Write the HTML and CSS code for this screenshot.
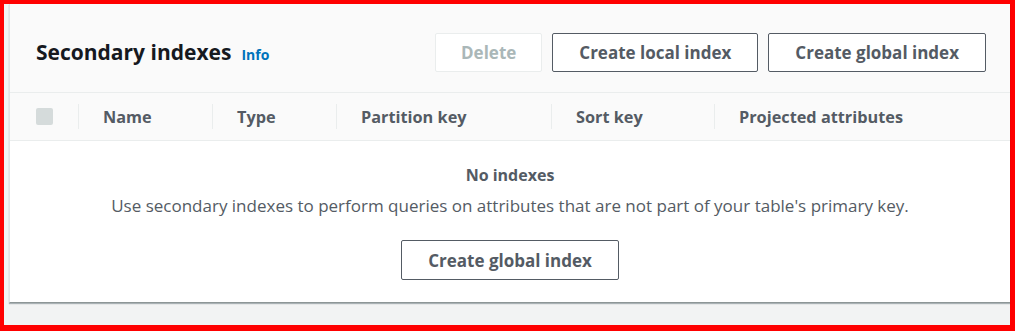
FILE: index.html
```html
<!DOCTYPE html>
<html>
<head>
<meta charset="utf-8">
<link rel="stylesheet" href="styles.css">
</head>
<body>
<div class="frame">
  <div class="page">
    <section class="card">
      <header class="card-header">
        <h2 class="title">Secondary indexes <a class="info">Info</a></h2>
        <div class="actions">
          <button class="btn btn-disabled">Delete</button>
          <button class="btn">Create local index</button>
          <button class="btn">Create global index</button>
        </div>
      </header>
      <div class="thead">
        <div class="th th-check"><span class="checkbox"></span></div>
        <div class="th th-name">Name</div>
        <div class="th th-type">Type</div>
        <div class="th th-pk">Partition key</div>
        <div class="th th-sk">Sort key</div>
        <div class="th th-proj">Projected attributes</div>
      </div>
      <div class="empty">
        <div class="empty-title">No indexes</div>
        <div class="empty-desc">Use secondary indexes to perform queries on attributes that are not part of your table's primary key.</div>
        <button class="btn">Create global index</button>
      </div>
    </section>
  </div>
</div>
</body>
</html>
```
FILE: styles.css
```css
* { box-sizing: border-box; }
html, body { margin: 0; padding: 0; }
body {
  font-family: "Open Sans", "Liberation Sans", sans-serif;
  background: #ff0000;
}
.frame {
  width: 1015px;
  height: 331px;
  border-style: solid;
  border-color: #ff0000;
  border-width: 4px 5px 6px 4px;
  background: #f2f3f3;
}
.page {
  padding: 0 0 0 5px;
  height: 100%;
}
.card {
  background: #ffffff;
  border-left: 1px solid #dfe3e3;
  border-bottom: 1px solid #8d9696;
  box-shadow: 0 1px 1px rgba(0,28,36,0.3);
  height: 299px;
}
.card-header {
  height: 89px;
  background: #fafafa;
  display: flex;
  align-items: center;
  justify-content: space-between;
  padding: 8px 24px 0 26px;
  border-bottom: 1px solid #eaeded;
}
.title {
  margin: 0;
  font-size: 21px;
  font-weight: 700;
  color: #16191f;
  display: flex;
  align-items: baseline;
  gap: 10px;
}
.info {
  font-size: 14px;
  font-weight: 700;
  color: #0073bb;
}
.actions {
  display: flex;
  gap: 10px;
}
.btn {
  font-family: inherit;
  font-size: 17px;
  font-weight: 700;
  color: #545b64;
  background: #ffffff;
  border: 1px solid #545b64;
  border-radius: 2px;
  height: 39px;
  padding: 0 26px;
}
.btn-disabled {
  color: #aab7b8;
  border-color: #eaeded;
  padding: 0 25px;
}
.thead {
  height: 48px;
  background: #fafafa;
  border-bottom: 1px solid #eaeded;
  display: flex;
  align-items: center;
}
.th {
  position: relative;
  font-size: 16.3px;
  font-weight: 700;
  color: #545b64;
  padding-left: 25px;
  height: 100%;
  display: flex;
  align-items: center;
}
.th + .th::before {
  content: "";
  position: absolute;
  left: 0;
  top: 11px;
  bottom: 11px;
  border-left: 1px solid #eaeded;
}
.th-check { width: 68px; padding-left: 26px; }
.th-name { width: 134px; }
.th-type { width: 124px; }
.th-pk { width: 215px; }
.th-sk { width: 163px; }
.checkbox {
  display: block;
  width: 17px;
  height: 17px;
  background: #d5dbdb;
  border-radius: 2px;
}
.empty {
  display: flex;
  flex-direction: column;
  align-items: center;
  padding-top: 22px;
}
.empty-title {
  font-size: 16px;
  font-weight: 700;
  color: #545b64;
  line-height: 24px;
}
.empty-desc {
  font-size: 17px;
  color: #545b64;
  line-height: 24px;
  margin-top: 7px;
  margin-bottom: 22px;
}
.empty .btn { height: 40px; padding: 0 26px; }
```
